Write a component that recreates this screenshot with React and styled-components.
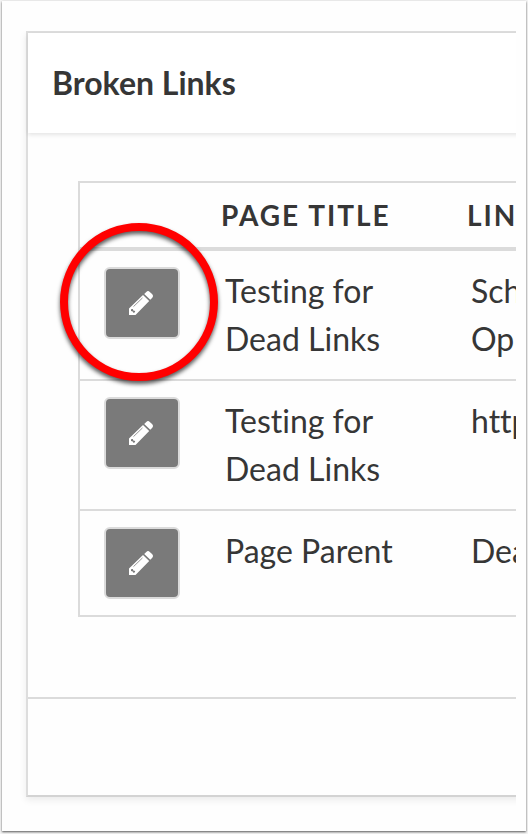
import React from 'react';
import styled, { createGlobalStyle } from 'styled-components';

const GlobalStyle = createGlobalStyle`
  *, *::before, *::after { box-sizing: border-box; }
  body {
    margin: 0;
    background: #f4f4f4;
    color: #363636;
    font-family: Lato, "Liberation Sans", sans-serif;
    font-size: 32px;
    font-variant-ligatures: none;
    line-height: 48px;
  }
`;

const Frame = styled.main`
  margin: 1px 2px 3px;
  padding: 30px 10px 34px 0;
  background: #fefefe;
  box-shadow: 0 1px 2px rgba(0, 0, 0, 0.65);
`;

const Viewport = styled.div`
  overflow: hidden;
  margin-bottom: -24px;
  padding: 0 0 24px 24px;
`;

const Card = styled.section`
  margin-right: -16px;
  border: 2px solid #dddddd;
  border-bottom-color: #d3d3d3;
  box-shadow: 0 3px 7px rgba(0, 0, 0, 0.08);
`;

const CardHeader = styled.header`
  padding: 26px 24px;
  background: #ffffff;
  box-shadow: 0 2px 4px rgba(0, 0, 0, 0.1);
`;

const Title = styled.h1`
  margin: 0;
  font-size: 32px;
  font-weight: 700;
  line-height: 48px;
`;

const CardBody = styled.div`
  padding: 48px 0 80px 50px;
`;

const CardFooter = styled.footer`
  height: 98px;
  border-top: 2px solid #dbdbdb;
`;

const Table = styled.table`
  width: 100%;
  table-layout: fixed;
  border: 2px solid #dbdbdb;
  border-right: 0;
  border-spacing: 0;
`;

const Col = styled.col`
  width: ${({ $width }) => $width};
`;

const HeadCell = styled.th`
  padding: 8px 20px;
  border-bottom: 4px solid #dbdbdb;
  font-size: 28px;
  font-weight: 700;
  letter-spacing: 2px;
  text-align: left;
  text-transform: uppercase;
  white-space: nowrap;
`;

const Row = styled.tr`
  & + & > td { border-top: 2px solid #dbdbdb; }
`;

const Cell = styled.td`
  padding: 16px 24px;
  vertical-align: top;
  white-space: ${({ $nowrap }) => ($nowrap ? 'nowrap' : 'normal')};
`;

const Line = styled.div``;

const ButtonWrap = styled.div`
  position: relative;
  width: 76px;
`;

const EditButton = styled.button`
  display: flex;
  align-items: center;
  justify-content: center;
  width: 76px;
  height: 72px;
  padding: 0 2px 0 0;
  border: 2px solid #dbdbdb;
  border-radius: 6px;
  background: #7a7a7a;
  color: #ffffff;
  cursor: pointer;
`;

const Highlight = styled.span`
  position: absolute;
  top: -44px;
  left: -44px;
  width: 158px;
  height: 158px;
  border: 8px solid #ff0000;
  border-radius: 50%;
  filter: drop-shadow(0 3px 2px rgba(0, 0, 0, 0.65));
  pointer-events: none;
`;

function PencilIcon() {
  return (
    <svg width="26" height="26" viewBox="0 0 26 26" aria-hidden="true">
      <path
        fill="currentColor"
        d="M1 25V18.5L15 5L21.2 11L7.5 25ZM16.2 4L18.3 1.9Q20 .3 21.8 1.9L24.3 4.3Q25.9 6 24.3 7.8L22.3 9.8Z"
      />
      <path stroke="#7a7a7a" strokeWidth="0.8" fill="none" d="M5.5 16.6L14.5 7.9" />
      <path fill="#7a7a7a" d="M3 19.2L4.8 19L5.3 20.4L7.2 21L6.7 22.6L5.2 22.8L4.8 21.4L3 21Z" />
    </svg>
  );
}

const rows = [
  { title: 'Testing for Dead Links', link: ['Sch', 'Op'], highlighted: true },
  { title: 'Testing for Dead Links', link: ['http'] },
  { title: 'Page Parent', link: ['Dea'] },
];

export default function App() {
  return (
    <>
      <GlobalStyle />
      <Frame>
        <Viewport>
          <Card>
            <CardHeader>
              <Title>Broken Links</Title>
            </CardHeader>
            <CardBody>
              <Table>
                <colgroup>
                  <Col $width="121px" />
                  <Col $width="246px" />
                  <Col $width="auto" />
                </colgroup>
                <thead>
                  <tr>
                    <HeadCell as="td" />
                    <HeadCell scope="col">Page Title</HeadCell>
                    <HeadCell scope="col">Lin</HeadCell>
                  </tr>
                </thead>
                <tbody>
                  {rows.map((row, index) => (
                    <Row key={index}>
                      <Cell>
                        <ButtonWrap>
                          <EditButton type="button" aria-label={`Edit ${row.title}`}>
                            <PencilIcon />
                          </EditButton>
                          {row.highlighted && <Highlight />}
                        </ButtonWrap>
                      </Cell>
                      <Cell>{row.title}</Cell>
                      <Cell $nowrap>
                        {row.link.map((line) => (
                          <Line key={line}>{line}</Line>
                        ))}
                      </Cell>
                    </Row>
                  ))}
                </tbody>
              </Table>
            </CardBody>
            <CardFooter />
          </Card>
        </Viewport>
      </Frame>
    </>
  );
}
